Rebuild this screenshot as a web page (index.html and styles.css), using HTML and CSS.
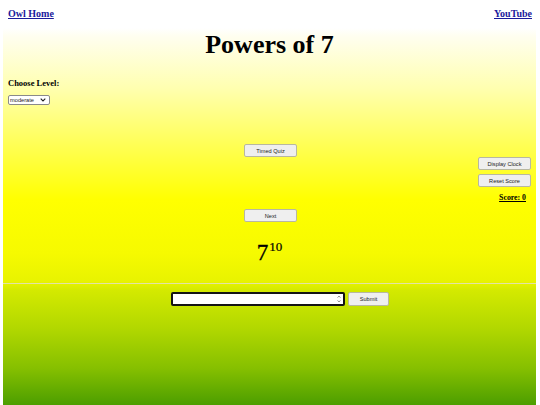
FILE: index.html
```html
<!DOCTYPE html>
<html lang="en">
<head>
<meta charset="utf-8">
<title>Powers of 7</title>
<link rel="stylesheet" href="styles.css">
</head>
<body>
<header class="topbar">
  <a class="toplink" href="#">Owl Home</a>
  <a class="toplink" href="#">YouTube</a>
</header>
<main class="board">
  <h1 class="title">Powers of 7</h1>
  <section class="level">
    <label class="level-label" for="level">Choose Level:</label>
    <div class="select-box">
      <span class="select-text">moderate</span>
      <svg class="chev" width="6" height="4" viewBox="0 0 6 4"><path d="M0.7 0.7 L3 3 L5.3 0.7" fill="none" stroke="#222" stroke-width="1.1"/></svg>
    </div>
  </section>
  <section class="controls">
    <div class="spacer"></div>
    <div class="center-col">
      <button class="btn">Timed Quiz</button>
      <button class="btn next">Next</button>
    </div>
    <div class="right-col">
      <button class="btn">Display Clock</button>
      <button class="btn">Reset Score</button>
      <span class="score">Score: 0</span>
    </div>
  </section>
  <div class="power">7<sup class="exp">10</sup></div>
  <div class="divider"></div>
  <section class="answer">
    <div class="answer-box">
      <span class="answer-field"></span>
      <svg class="spin" width="4" height="8" viewBox="0 0 4 8"><path d="M0.6 2.6 L2 1 L3.4 2.6 M0.6 5.4 L2 7 L3.4 5.4" fill="none" stroke="#777" stroke-width="0.8"/></svg>
    </div>
    <button class="btn submit">Submit</button>
  </section>
</main>
</body>
</html>
```
FILE: styles.css
```css
html, body {
  margin: 0;
  padding: 0;
  background: #ffffff;
}
body {
  width: 540px;
  height: 405px;
  overflow: hidden;
  font-family: "Liberation Serif", "Times New Roman", serif;
}
.topbar {
  display: flex;
  justify-content: space-between;
  padding: 8px 8px 8px 8px;
  height: 12px;
}
.toplink {
  font-size: 10px;
  line-height: 12px;
  font-weight: bold;
  color: #1a1a9c;
  text-decoration: underline;
}
.board {
  margin: 0 4px 0 3px;
  height: 377px;
  display: flex;
  flex-direction: column;
  background: linear-gradient(to bottom,
    #ffffff 0px,
    #fffef0 8px,
    #ffffb0 60px,
    #ffff58 115px,
    #ffff00 172px,
    #f6fa00 225px,
    #e8f300 254px,
    #d4ea00 262px,
    #b2d800 300px,
    #86c000 340px,
    #4c9e00 377px);
}
.title {
  margin: 2px 0 0 0;
  font-size: 26px;
  line-height: 30px;
  font-weight: bold;
  text-align: center;
  color: #000;
}
.level {
  margin-top: 18px;
  padding-left: 5px;
  display: flex;
  flex-direction: column;
  align-items: flex-start;
}
.level-label {
  font-size: 8.5px;
  line-height: 10px;
  font-weight: bold;
  color: #000;
}
.select-box {
  margin-top: 7px;
  height: 8px;
  width: 36px;
  border: 1px solid #8a8a8a;
  border-radius: 2px;
  background: #ffffff;
  display: flex;
  align-items: center;
  justify-content: space-between;
  padding: 0 3px 0 1px;
  box-sizing: content-box;
}
.select-text {
  font-family: "Liberation Sans", Arial, sans-serif;
  font-size: 5.7px;
  line-height: 8px;
  color: #222;
}
.controls {
  margin-top: 39px;
  display: flex;
  padding: 0 5px 0 7px;
}
.spacer {
  flex: 1;
}
.center-col {
  display: flex;
  flex-direction: column;
  width: 53px;
}
.right-col {
  flex: 1;
  display: flex;
  flex-direction: column;
  align-items: flex-end;
  padding-top: 13px;
  gap: 4px;
}
.btn {
  width: 53px;
  height: 13px;
  padding: 0;
  margin: 0;
  font-family: "Liberation Sans", Arial, sans-serif;
  font-size: 5.6px;
  color: #222;
  background: #efefef;
  border: 1px solid #b8b8a0;
  border-radius: 2px;
}
.next {
  margin-top: 52px;
}
.score {
  margin-top: 2px;
  padding-right: 5px;
  font-size: 7.8px;
  line-height: 10px;
  font-weight: bold;
  text-decoration: underline;
  color: #000;
}
.power {
  margin-top: 18px;
  text-align: center;
  font-size: 23px;
  line-height: 26px;
  color: #000;
  -webkit-text-stroke: 0.3px #000;
}
.exp {
  font-size: 13px;
  line-height: 0;
  vertical-align: 9px;
  margin-left: 1px;
  -webkit-text-stroke: 0.2px #000;
}
.divider {
  margin-top: 17px;
  height: 1px;
  background: #e2e2a6;
}
.answer {
  margin-top: 8px;
  display: flex;
  justify-content: center;
  align-items: flex-start;
  gap: 3px;
  padding-left: 21px;
}
.answer-box {
  width: 168px;
  height: 10px;
  border: 2px solid #141414;
  border-radius: 2px;
  background: #ffffff;
  display: flex;
  align-items: center;
  justify-content: flex-end;
  padding-right: 2px;
  box-sizing: content-box;
}
.answer-field {
  flex: 1;
}
.submit {
  width: 41px;
  height: 14px;
}
```
